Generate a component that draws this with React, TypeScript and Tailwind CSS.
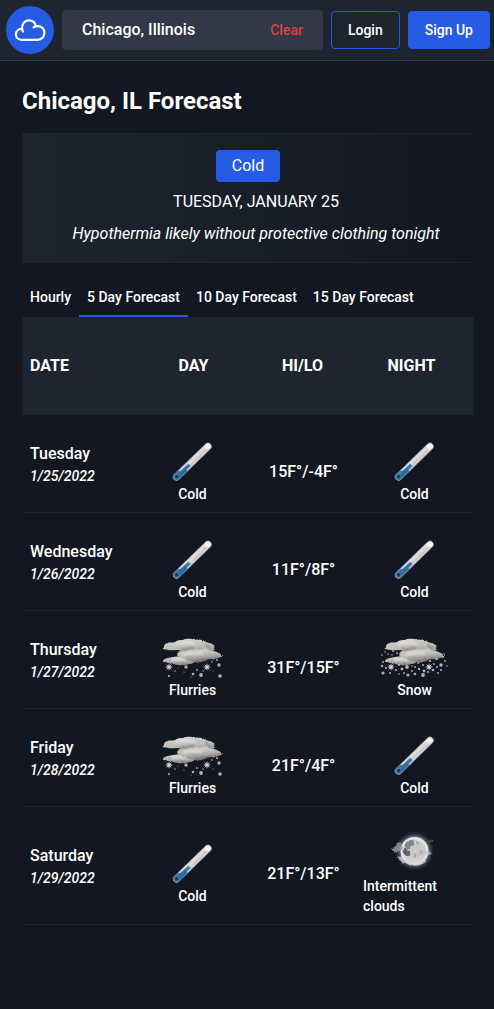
import { useState } from "react";

type Condition = "Cold" | "Flurries" | "Snow" | "Intermittent clouds";

interface ForecastDay {
  name: string;
  date: string;
  day: Condition;
  temps: string;
  night: Condition;
}

const forecast: ForecastDay[] = [
  { name: "Tuesday", date: "1/25/2022", day: "Cold", temps: "15F°/-4F°", night: "Cold" },
  { name: "Wednesday", date: "1/26/2022", day: "Cold", temps: "11F°/8F°", night: "Cold" },
  { name: "Thursday", date: "1/27/2022", day: "Flurries", temps: "31F°/15F°", night: "Snow" },
  { name: "Friday", date: "1/28/2022", day: "Flurries", temps: "21F°/4F°", night: "Cold" },
  { name: "Saturday", date: "1/29/2022", day: "Cold", temps: "21F°/13F°", night: "Intermittent clouds" },
];

const tabs = ["Hourly", "5 Day Forecast", "10 Day Forecast", "15 Day Forecast"];

const flurryFlakes = [
  [20, 36, 0.8], [31, 32, 1.7], [42, 35, 0.9], [64, 30, 1.7], [62, 25, 1], [57, 27, 0.8],
  [46, 40, 1.9], [38, 39, 1.3], [29, 37, 0.6], [14, 41, 1.1], [65, 41, 1.8], [48, 36, 0.7],
  [23, 33, 0.5], [36, 42, 0.5], [58, 36, 0.5],
];

const snowFlakes = [
  [5, 20, 0.8], [8, 17, 0.8], [12, 14, 0.8], [16, 16, 0.9], [20, 18, 1], [11, 19, 0.8], [15, 20, 0.8],
  [6, 27, 1], [5, 31, 1.2], [9, 33, 1], [6, 38, 1.6], [13, 38, 1.1], [19, 35, 1], [22, 30, 1],
  [25, 34, 1.4], [30, 32, 1.9], [27, 38, 1], [31, 40, 1.6], [35, 36, 0.9], [38, 32, 1], [38, 39, 1.3],
  [42, 34, 1.2], [41, 28, 0.9], [46, 30, 1], [46, 40, 1.9], [47, 36, 1.4], [51, 37, 1], [53, 26, 1],
  [56, 35, 1.3], [57, 29, 0.9], [60, 24, 1.1], [60, 32, 1], [64, 30, 1.7], [64, 35, 1], [66, 22, 1],
  [68, 26, 0.9], [70, 31, 0.8], [67, 19, 0.8], [61, 38, 0.9], [35, 31, 0.8], [22, 39, 0.8],
];

function CloudLogo() {
  return (
    <svg viewBox="0 0 48 48" className="size-12" fill="none" stroke="currentColor" strokeWidth="2.2" strokeLinecap="round" strokeLinejoin="round" aria-hidden="true">
      <path d="M17 25.500C16.300 24.400 16 23 16 21.700C16 17.600 19.100 14.400 23 14.400C26.500 14.400 29.200 16.800 29.900 20.200" />
      <path d="M27.500 21.300C28.700 20.500 30.200 20.100 31.700 20.100C35.800 20.100 38.400 23.200 38.400 26.800C38.400 30.800 35.500 33.800 31.700 33.800H15.800C12.400 33.800 9.900 31.500 9.900 28.400C9.900 25.400 12.200 23 15.600 22.900" />
    </svg>
  );
}

function Thermometer() {
  return (
    <svg viewBox="0 0 75 45" className="h-[45px] w-[75px]" aria-hidden="true">
      <path d="M21.5 38 53 7.500" stroke="#8b8a90" strokeWidth="7.4" strokeLinecap="round" />
      <path d="M21.5 38 53 7.300" stroke="#ded9da" strokeWidth="6.4" strokeLinecap="round" />
      <path d="M26 35 51 11" stroke="#c6c0c4" strokeWidth="1.2" />
      <path d="M52 7.500h1.600" stroke="#f5f2f2" strokeWidth="4.5" strokeLinecap="round" />
      <path d="M21.7 37.800 24 35.500" stroke="#477ba4" strokeWidth="7" strokeLinecap="round" />
      <path d="M24 35.600 34.500 26" stroke="#2d7ab5" strokeWidth="3.4" />
      <path d="M24.500 36.600 31 30.500" stroke="#2d6c9f" strokeWidth="4" />
      <circle cx="21.8" cy="37.700" r="1.8" fill="#183b57" />
    </svg>
  );
}

function Flake({ x, y }: { x: number; y: number }) {
  return (
    <g stroke="#dfe3e9" strokeWidth="0.7" strokeLinecap="round">
      <path d={`M${x - 3} ${y}h6M${x} ${y - 3}v6M${x - 2.2} ${y - 2.2}l4.4 4.4M${x + 2.2} ${y - 2.2}l-4.4 4.4`} />
      <circle cx={x} cy={y} r="2.3" fill="#dfe3e9" fillOpacity="0.5" stroke="none" />
    </g>
  );
}

function SnowCloud({ id, flakes }: { id: string; flakes: number[][] }) {
  return (
    <svg viewBox="0 0 75 45" className="h-[45px] w-[75px]" aria-hidden="true">
      <defs>
        <linearGradient id={`${id}-top`} x1="0" y1="0" x2="0.3" y2="1">
          <stop offset="0" stopColor="#dddbd8" />
          <stop offset="0.5" stopColor="#bebcb9" />
          <stop offset="1" stopColor="#858380" />
        </linearGradient>
        <linearGradient id={`${id}-front`} x1="0" y1="0" x2="0" y2="1">
          <stop offset="0" stopColor="#d4d2cf" />
          <stop offset="0.5" stopColor="#bab8b5" />
          <stop offset="1" stopColor="#7b7976" />
        </linearGradient>
        <filter id={`${id}-soft`} x="-10%" y="-20%" width="120%" height="140%" colorInterpolationFilters="sRGB">
          <feTurbulence type="fractalNoise" baseFrequency="0.3" numOctaves="2" seed="4" result="noise" />
          <feDisplacementMap in="SourceGraphic" in2="noise" scale="2.5" xChannelSelector="R" yChannelSelector="G" result="rough" />
          <feGaussianBlur in="rough" stdDeviation="0.45" />
        </filter>
        <filter id={`${id}-shade`} x="-20%" y="-50%" width="140%" height="200%" colorInterpolationFilters="sRGB">
          <feGaussianBlur stdDeviation="1" />
        </filter>
      </defs>
      <g filter={`url(#${id}-soft)`}>
        <path d="M9 14c-1-3 1-5 3-6 3-1 5 0 8-1 3-2 5-2 8-2 4-2 9-1 12 0 5-1 8 0 11 2 3 1 6 1 9 4-1 2-2 4-1 6 3 0 7 2 8 4-5 3-10 3-16 2l-18 1-10-4c-1-2 1-3 1-5-5 0-10 1-15-1z" fill={`url(#${id}-top)`} />
        <path d="M8 26c2-4 7-3 10-4 6-1 11-1 15 1 4-1 6 1 9 2-3 4-7 4-12 5-5 1-10 0-14-2-3 0-6 0-8-2z" fill={`url(#${id}-front)`} />
        <path d="M22 20c2-3 5-4 9-4 5-2 9-2 13-1 5-2 10-1 12 1 5 0 9 2 11 5-4 3-9 3-14 3-3 2-8 4-12 3-7 0-14-3-19-7z" fill={`url(#${id}-top)`} />
      </g>
      <g filter={`url(#${id}-shade)`} fill="none">
        <path d="M25 14c5 1 9-1 14-1" stroke="#7c7a77" strokeWidth="2" opacity="0.8" />
        <path d="M50 10c3 1 4 3 6 3" stroke="#6f6e6b" strokeWidth="2" opacity="0.6" />
        <path d="M28 20c6-3 11-1 20-2" stroke="#e8e6e4" strokeWidth="2.4" opacity="0.7" />
        <path d="M21 9c6-2 12-2 19 0" stroke="#eeecea" strokeWidth="2.2" opacity="0.7" />
        <path d="M17 25c5-1 9-1 14 0" stroke="#eeecea" strokeWidth="2" opacity="0.7" />
        <path d="M40 26c6 0 12-2 18-2" stroke="#636260" strokeWidth="1.6" opacity="0.7" />
      </g>
      {flakes.map(([x, y, r]) => (
        <circle key={`${x}-${y}`} cx={x} cy={y} r={r} fill="#d5dae0" opacity="0.8" />
      ))}
      <Flake x={14} y={32} />
      <Flake x={52} y={32} />
    </svg>
  );
}

function CloudyMoon() {
  return (
    <svg viewBox="0 0 75 45" className="h-[45px] w-[75px]" aria-hidden="true">
      <defs>
        <radialGradient id="moon-glow">
          <stop offset="0.65" stopColor="#b9c8d4" stopOpacity="0.95" />
          <stop offset="0.78" stopColor="#71808e" stopOpacity="0.45" />
          <stop offset="1" stopColor="#3a4654" stopOpacity="0" />
        </radialGradient>
        <radialGradient id="moon-face" cx="0.5" cy="0.5" r="0.5">
          <stop offset="0" stopColor="#cbc7c6" />
          <stop offset="0.75" stopColor="#cdcaca" />
          <stop offset="1" stopColor="#f1f4f6" />
        </radialGradient>
        <filter id="moon-wisp" x="-20%" y="-20%" width="140%" height="140%" colorInterpolationFilters="sRGB">
          <feTurbulence type="fractalNoise" baseFrequency="0.25" numOctaves="2" seed="7" result="noise" />
          <feDisplacementMap in="SourceGraphic" in2="noise" scale="3" xChannelSelector="R" yChannelSelector="G" result="rough" />
          <feGaussianBlur in="rough" stdDeviation="0.6" />
        </filter>
      </defs>
      <circle cx="37.500" cy="20" r="20" fill="url(#moon-glow)" />
      <circle cx="37.500" cy="20" r="13.800" fill="url(#moon-face)" />
      <g filter="url(#moon-wisp)">
        <path d="M31 10c3-2 6-1 6 2s-4 3-4 5-4 1-5-1 0-4 3-6z" fill="#6b6a6d" opacity="0.75" />
        <path d="M26 18c3-1 6 1 7 4s-3 4-5 2-3-4-2-6z" fill="#47474c" opacity="0.8" />
        <path d="M39 11c2-1 4 1 3 2s-3 1-3-2zM43 19c2-1 3 2 2 4s-3 0-2-4zM37 22c2 0 3 2 2 4s-3 0-2-4z" fill="#989596" opacity="0.6" />
        <path d="M14 18c2 0 3-3 6-4-2-2 2-3 4-2 0 3 2 5 0 7-1 3-4 2-5 3 0-2-3-1-5-4z" fill="#8f969c" opacity="0.85" />
        <path d="M20 26c3-1 5 0 8 1 4-1 5 2 10 1s8-2 11-1c0 4-2 5-3 6-4 2-11 2-14 1-2-2-8-2-12-8z" fill="#d5d7d9" opacity="0.75" />
        <path d="M46 22c3-2 5-1 9 0-2 2-6 3-9 0z" fill="#bfc4c8" opacity="0.8" />
        <path d="M50 9c2 1 4 1 7-1-1 3-4 4-7 1z" fill="#6e757d" opacity="0.8" />
      </g>
    </svg>
  );
}

function ConditionIcon({ condition, id }: { condition: Condition; id: string }) {
  if (condition === "Cold") return <Thermometer />;
  if (condition === "Flurries") return <SnowCloud id={id} flakes={flurryFlakes} />;
  if (condition === "Snow") return <SnowCloud id={id} flakes={snowFlakes} />;
  return <CloudyMoon />;
}

function ConditionCell({ condition, id }: { condition: Condition; id: string }) {
  return (
    <td className="flex flex-col items-center text-sm font-medium">
      <ConditionIcon condition={condition} id={id} />
      <span>{condition}</span>
    </td>
  );
}

export default function App() {
  const [location, setLocation] = useState("Chicago, Illinois");
  const [activeTab, setActiveTab] = useState("5 Day Forecast");

  return (
    <div className="min-h-screen bg-[#131721] font-['Roboto',sans-serif] text-white">
      <header className="flex items-center gap-2 border-b border-[#323a46] bg-[#1e2530] py-1.5 pr-1 pl-1.5">
        <a href="#" aria-label="Home" className="shrink-0 rounded-full bg-[#265be3]">
          <CloudLogo />
        </a>
        <div className="flex h-10 min-w-0 flex-1 items-center rounded bg-[#323845] px-5">
          <input
            aria-label="Location"
            value={location}
            onChange={(e) => setLocation(e.target.value)}
            className="min-w-0 flex-1 bg-transparent font-medium text-white outline-none"
          />
          <button type="button" onClick={() => setLocation("")} className="text-sm font-medium text-[#dd4246]">
            Clear
          </button>
        </div>
        <button type="button" className="rounded border border-[#265be3] px-4 py-2 text-sm font-medium">
          Login
        </button>
        <button type="button" className="rounded border border-[#265be3] bg-[#265be3] px-4 py-2 text-sm font-medium whitespace-nowrap">
          Sign Up
        </button>
      </header>

      <main className="pt-6 pr-5 pb-6 pl-[22px]">
        <h1 className="text-2xl font-bold">Chicago, IL Forecast</h1>

        <section className="mt-4 flex flex-col items-center gap-2 border-y border-[#1e2530] bg-linear-to-r from-[#1e2530] to-[#131721] py-4">
          <span className="rounded bg-[#265be3] px-4 py-1">Cold</span>
          <p className="pl-4 uppercase">Tuesday, January 25</p>
          <p className="pl-4 italic">Hypothermia likely without protective clothing tonight</p>
        </section>

        <div role="tablist" className="mt-4 flex">
          {tabs.map((tab) => (
            <button
              key={tab}
              type="button"
              role="tab"
              aria-selected={tab === activeTab}
              onClick={() => setActiveTab(tab)}
              className="border-b-2 border-transparent px-2 py-2 text-sm font-medium aria-selected:border-[#265be3]"
            >
              {tab}
            </button>
          ))}
        </div>

        <table className="block w-full">
          <thead className="block">
            <tr className="grid grid-cols-4 bg-[#1e2530] px-2 py-[37px] text-center">
              <th className="text-left font-bold">DATE</th>
              <th className="font-bold">DAY</th>
              <th className="font-bold">HI/LO</th>
              <th className="font-bold">NIGHT</th>
            </tr>
          </thead>
          <tbody className="block">
            {forecast.map((row) => (
              <tr key={row.date} className="grid grid-cols-4 items-center gap-2 border-b border-[#1e2530] px-2 pt-6 pb-2">
                <td className="flex flex-col pb-4 font-medium">
                  <span>{row.name}</span>
                  <span className="text-sm italic">{row.date}</span>
                </td>
                <ConditionCell condition={row.day} id={`${row.name}-day`} />
                <td className="text-center font-medium">{row.temps}</td>
                <ConditionCell condition={row.night} id={`${row.name}-night`} />
              </tr>
            ))}
          </tbody>
        </table>
      </main>
    </div>
  );
}
